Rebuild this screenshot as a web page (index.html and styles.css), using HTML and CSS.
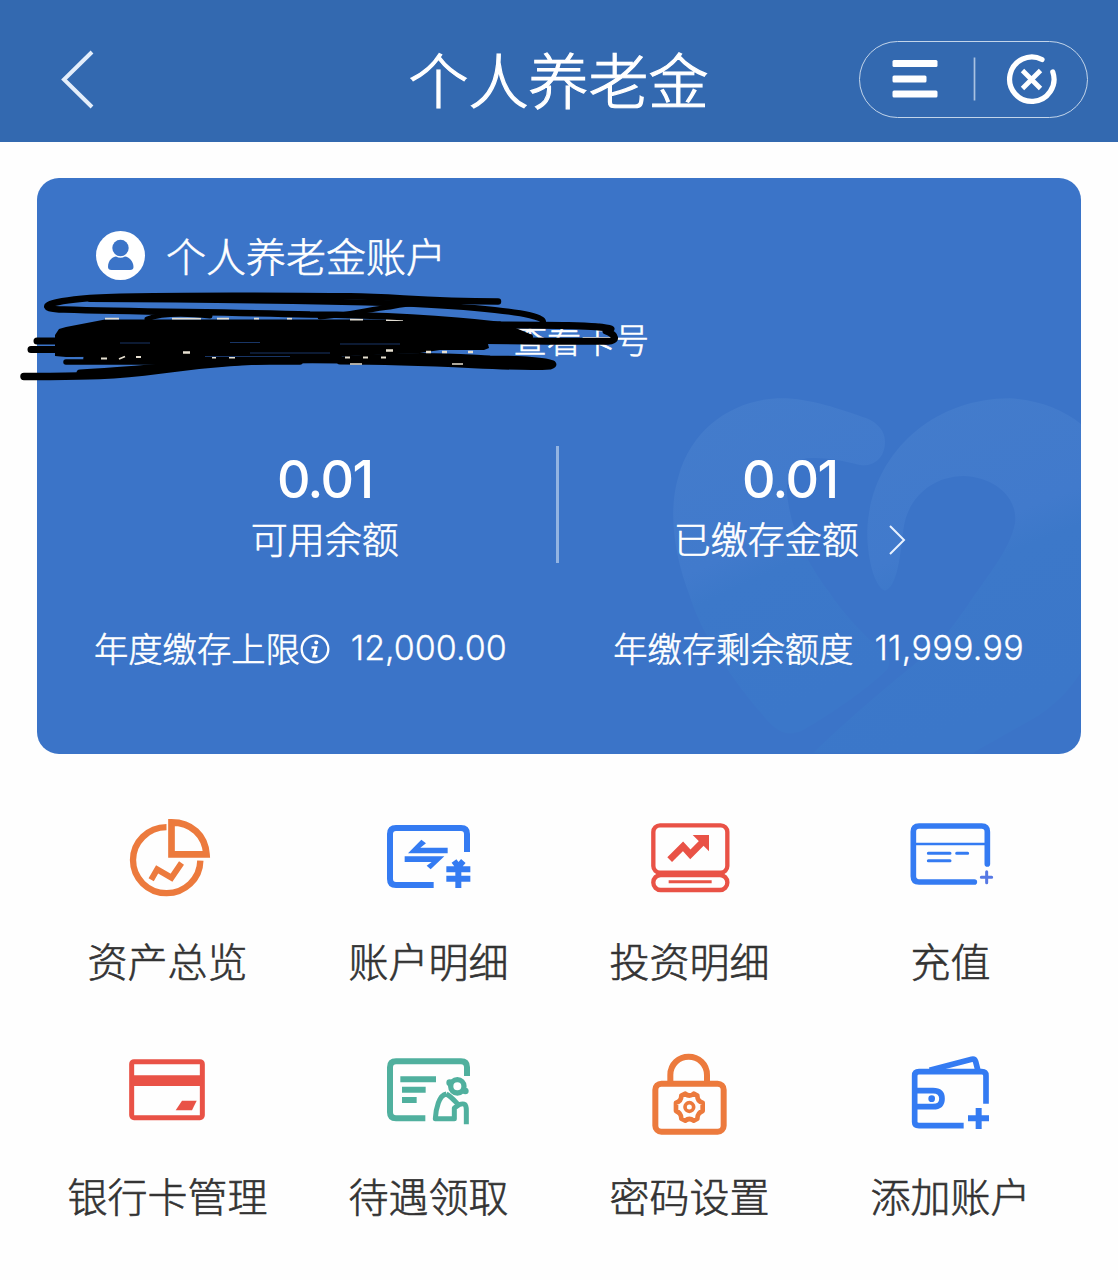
FILE: index.html
```html
<!DOCTYPE html>
<html lang="zh-CN">
<head>
    <meta charset="UTF-8">
    <meta name="viewport" content="width=device-width, initial-scale=1.0">
    <title>个人养老金</title>
    <link rel="stylesheet" href="styles.css">
</head>
<body>
    <header class="header">
        <svg class="back" width="40" height="64" viewBox="0 0 40 64">
            <path d="M35 4L7 31.500L35 59" fill="none" stroke="#e4eefb" stroke-width="4"/>
        </svg>
        <h1>个人养老金</h1>
        <div class="capsule">
            <svg width="228" height="76" viewBox="0 0 228 76">
                <g fill="#fff">
                    <rect x="33.500" y="19" width="45" height="7" rx="1.5"/>
                    <rect x="33.500" y="34.5" width="34" height="7" rx="1.5"/>
                    <rect x="33.500" y="49.500" width="45" height="7" rx="1.5"/>
                </g>
                <path d="M115.500 16.500V59.500" stroke="#a9c2e2" stroke-width="1.700"/>
                <g fill="none" stroke="#fff" stroke-linecap="round">
                    <path d="M183 18.500A22.200 22.200 0 1 0 193.800 31" stroke-width="5.200"/>
                    <path d="M163.500 29.500L181.500 47.500M181.500 29.500L163.500 47.500" stroke-width="4.800" stroke-linecap="butt"/>
                </g>
            </svg>
        </div>
    </header>

    <section class="card">
        <svg class="heart" width="442" height="373" viewBox="0 0 1326 1119">
            <defs>
                <linearGradient id="heartFill" x1="0" y1="0" x2="0.3" y2="1">
                    <stop offset="0" stop-color="#447ccb"/>
                    <stop offset="0.5" stop-color="#417acc"/>
                    <stop offset="0.6" stop-color="#3c78c9"/>
                    <stop offset="1" stop-color="#3b77c9"/>
                </linearGradient>
            </defs>
            <g fill="url(#heartFill)">
                <path d="M735 185C735 235 700 260 660 255C600 240 550 230 500 235C455 245 430 290 445 370C460 470 510 560 570 640C610 700 650 740 690 780C740 810 760 840 740 870C680 930 560 1010 490 1050C450 1070 420 1060 390 1030C300 930 190 780 150 650C100 520 85 390 115 290C160 130 300 50 440 55C530 60 620 95 680 115C715 130 735 155 735 185Z"/>
                <path d="M735 632C700 620 680 520 682 450C690 230 870 55 1110 55C1200 60 1270 90 1326 134V870C1290 930 1250 970 1190 1010C1120 1050 1050 1090 1000 1118H520C620 1020 740 920 850 830C900 790 930 750 980 680C1040 590 1110 510 1125 430C1135 350 1060 290 970 288C870 290 800 360 790 450C780 540 770 620 735 632Z"/>
            </g>
        </svg>

        <div class="account">
            <svg width="49" height="49" viewBox="0 0 49 49">
                <circle cx="24.500" cy="24.500" r="24.500" fill="#fff"/>
                <circle cx="24.500" cy="17" r="8.200" fill="#3b74c8"/>
                <path d="M12 36C12 29 17 25.500 20 25.500Q24.500 28 29 25.500C33 26 37.500 30 37.500 36Q37.500 39 34 39H15.500Q12 39 12 36Z" fill="#3b74c8"/>
            </svg>
            <span>个人养老金账户</span>
        </div>
        <div class="card-number">
            <a class="show-number">查看卡号</a>
        </div>

        <div class="balances">
            <div class="balance">
                <div class="amount">0.01</div>
                <div class="caption">可用余额</div>
            </div>
            <div class="divider"></div>
            <div class="balance">
                <div class="amount">0.01</div>
                <div class="caption">已缴存金额
                    <svg class="arrow" width="18" height="32" viewBox="0 0 18 32">
                        <path d="M2 2L16 16L2 30" fill="none" stroke="#e8f2ff" stroke-width="2"/>
                    </svg>
                </div>
            </div>
        </div>

        <div class="limits">
            <div class="limit">
                <span>年度缴存上限</span>
                <svg class="info" width="30" height="30" viewBox="0 0 30 30">
                    <circle cx="15" cy="15" r="13.300" fill="none" stroke="#fff" stroke-width="2.300"/>
                    <circle cx="16.300" cy="8.500" r="2" fill="#fff"/>
                    <path d="M11.500 13.500H16L13.700 22.300H17.500" fill="none" stroke="#fff" stroke-width="2.600"/>
                </svg>
                <span class="num">12,000.00</span>
            </div>
            <div class="limit">
                <span>年缴存剩余额度</span>
                <span class="num num-left">11,999.99</span>
            </div>
        </div>

        <!-- pen strokes over the card number -->
        <svg class="scribble" width="640" height="104" viewBox="0 284 640 104">
            <path d="M55 335L59 329L66 327L105 319.500H430L500 321.500L530 334V344L488 344L489 348L484 350H440L420 353L350 356L66 357L55 356Z"/>
            <path d="M105 318.700H119M172 318.700H201M217 318.700H229M254 318.700H259M287 318.700H292M350 319.500H363M386 320H403" stroke="#e2ddd3" stroke-width="1.800"/>
            <g fill="none" stroke="#000" stroke-linecap="round" stroke-linejoin="round">
                <path d="M498 301.500C420 301 400 297 350 296.200C270 296 150 294.500 90 298C42 302 36 309 64 309.500C140 312 230 312 310 314.500C390 315 450 319 500 325" stroke-width="6.500"/>
                <path d="M90 299C190 299.500 290 300.500 400 303.500C460 306 545 312 543 322" stroke-width="6"/>
                <path d="M147 319C160 314 180 313 210 316M320 317C350 315 370 309 390 307C405 304 415 303 430 302" stroke-width="5"/>
                <path d="M37 341H90M31 349.500H110" stroke-width="7"/>
                <path d="M500 325C545 325 600 325 611 329M606 331C617 335 617 341 608 341.300C560 341.500 510 341 460 340" stroke-width="7"/>
                <path d="M500 337H530" stroke-width="6"/>
                <path d="M66 362H300M86 358.500H340" stroke-width="5.500"/>
                <path d="M24 376.500C70 376 100 378 160 370C210 363 250 361 300 359" stroke-width="7.500"/>
                <path d="M80 373C170 368 230 358 340 360C420 354 450 357 490 359C535 359 562 363 550 366C510 369 450 361 340 361" stroke-width="7"/>
            </g>
            <path d="M101 358.500H107M119 359L125 356.500M136 357H141M212 357.500H216M229 357.500H235M345 357.500H350M363 357.500H368M381 357.500H386" stroke="#e6dfd0" stroke-width="1.800"/>
            <path d="M350 364H362M452 364H463" stroke="#e6dfd0" stroke-width="1.500"/>
            <path d="M183 352.500H190M386 350.500H393M426 352H431M442 352H447M468 352H473" stroke="#e6dfd0" stroke-width="2.500"/>
            <path d="M120 343H150M230 342.500H260M340 344H400M250 353H330M205 356.500H290" stroke="#183566" stroke-width="1"/>
        </svg>
    </section>

    <nav class="menu">
        <a class="item">
            <svg width="120" height="110" viewBox="-7.500 15 360 330" fill="none" stroke="#ec7a3d" stroke-width="19">
                <path d="M168 81.500A101 99 0 1 0 269.500 182"/>
                <path d="M183 67V163H288C284 106 243 67 183 67Z" stroke-width="20"/>
                <path d="M122 239L140 208L183 233L213 189" stroke-width="18"/>
            </svg>
            <span>资产总览</span>
        </a>
        <a class="item">
            <svg width="120" height="110" viewBox="-3 15 360 330" fill="none" stroke="#347bf2" stroke-width="18">
                <path d="M191 255H78Q60 255 60 237V102Q60 84 78 84H273Q291 84 291 102V156"/>
                <path d="M114 160L154 119L168 130L151 143H233V160ZM223 169L182 208L170 197L185 186H104V169Z" fill="#347bf2" stroke="none"/>
                <path d="M252 183L265 200L280 183M229 208H301M229 236H301M265 200V264" stroke-width="18"/>
            </svg>
            <span>账户明细</span>
        </a>
        <a class="item">
            <svg width="120" height="110" viewBox="0 15 360 330" fill="none" stroke="#e95246" stroke-width="13">
                <rect x="70" y="76" width="222" height="142" rx="20"/>
                <rect x="70" y="225" width="222" height="45" rx="22"/>
                <path d="M85 221H277" stroke-width="15"/>
                <path d="M116 245H245" stroke-width="9"/>
                <path d="M119 179L159 139L181 163L222 122" stroke-width="20"/>
                <path d="M188 105H237V154Z" fill="#e95246" stroke="none"/>
            </svg>
            <span>投资明细</span>
        </a>
        <a class="item">
            <svg width="120" height="110" viewBox="783 15 360 330" fill="none" stroke="#347bf2" stroke-width="17" stroke-linecap="round">
                <path d="M1033 246H867Q850 246 850 229V95Q850 78 867 78H1055Q1072 78 1072 95V192"/>
                <path d="M855 132H1070" stroke-width="8"/>
                <path d="M895 160H960M980 160H1013M895 182H960" stroke-width="9"/>
                <path d="M1054 232H1085M1070 215V248" stroke="#5678e4" stroke-width="9"/>
            </svg>
            <span>充值</span>
        </a>
        <a class="item">
            <svg width="120" height="110" viewBox="-6 0 360 330" fill="none" stroke="#e95246" stroke-width="15">
                <rect x="65" y="65" width="212" height="168" rx="7"/>
                <path d="M65 122H277" stroke-width="32"/>
                <path d="M216 182H260L246 211H197Z" fill="#e95246" stroke="none"/>
            </svg>
            <span>银行卡管理</span>
        </a>
        <a class="item">
            <svg width="120" height="110" viewBox="777 0 360 330" fill="none" stroke="#50b09e" stroke-width="18">
                <path d="M946 235H858Q840 235 840 217V82Q840 64 858 64H1053Q1071 64 1071 82V108"/>
                <path d="M871 118H978M876 149H947M876 180H920"/>
                <circle cx="1042" cy="139" r="20" stroke-width="16"/>
                <circle cx="1019" cy="128" r="10" fill="#50b09e" stroke="none"/>
                <circle cx="1066" cy="153" r="10" fill="#50b09e" stroke="none"/>
                <path d="M1009 162C987 165 978 206 976 236H1033V204L1047 194C1064 188 1069 193 1069 211V253M1009 162C1025 171 1035 184 1048 197" stroke-width="15" stroke-linejoin="round"/>
            </svg>
            <span>待遇领取</span>
        </a>
        <a class="item">
            <svg width="120" height="110" viewBox="0 0 360 330" fill="none" stroke="#ec7a3d" stroke-width="18">
                <rect x="76" y="131" width="205" height="144" rx="18"/>
                <path d="M121 130V105C121 72 147 50 176 50S231 72 231 105V130"/>
                <path d="M166 161Q178 172 191 161L202 167Q202 184 218 188V213Q202 219 202 236L191 242Q178 232 166 242L154 236Q154 219 138 213V188Q154 184 154 167Z" stroke-width="14" stroke-linejoin="round"/>
                <circle cx="178" cy="201" r="13" stroke-width="11"/>
            </svg>
            <span>密码设置</span>
        </a>
        <a class="item">
            <svg width="120" height="110" viewBox="783 0 360 330" fill="none" stroke="#347bf2" stroke-width="17">
                <path d="M1001 257H867Q854 257 854 246V107Q854 95 867 95H1055Q1068 95 1068 107V191"/>
                <path d="M899 91L1025 58Q1034 56 1037 65L1044 92" stroke-width="17"/>
                <path d="M860 152H909Q936 152 936 176T909 200H860"/>
                <circle cx="905" cy="176" r="10" fill="#347bf2" stroke="none"/>
                <path d="M1014 235H1077M1046 204V267" stroke-width="18"/>
            </svg>
            <span>添加账户</span>
        </a>
    </nav>
</body>
</html>
```
FILE: styles.css
```css
* {
    box-sizing: border-box;
}
body {
    margin: 0;
    min-height: 1280px;
    background-color: #fefefe;
    color: #333;
    font-family: "Noto Sans CJK SC", sans-serif;
    font-weight: 300;
    -webkit-text-stroke: 0.600px;
}
svg {
    display: block;
    flex-shrink: 0;
}
.header {
    display: grid;
    grid-template-columns: 1fr auto 1fr;
    align-items: center;
    height: 142px;
    padding: 17px 30px 0 57px;
    background-color: #3369b0;
    color: #fff;
}
.header h1 {
    margin: 0 28px 4px 0;
    font-size: 60px;
    font-weight: 300;
    line-height: 80px;
    -webkit-text-stroke: 1.200px;
}
.capsule {
    justify-self: end;
    width: 229px;
    height: 77px;
    border: 1.500px solid #c3d5ea;
    border-radius: 39px;
}
.capsule svg {
    margin: -1px;
}
.card {
    position: relative;
    height: 576px;
    margin: 36px 37px 0;
    padding-top: 47px;
    border-radius: 22px;
    background-color: #3b74c8;
    color: #fff;
}
.heart {
    position: absolute;
    right: -1px;
    bottom: 1px;
    clip-path: inset(0 1px 0 0);
}
.account {
    display: flex;
    align-items: center;
    gap: 21px;
    height: 60px;
    padding-left: 59px;
    font-size: 40px;
}
.card-number {
    height: 50px;
    margin-top: 29px;
    padding-left: 476px;
    font-size: 34px;
    line-height: 50px;
}
.balances {
    position: relative;
    display: grid;
    grid-template-columns: 1fr 3px 1fr;
    height: 117px;
    margin-top: 82px;
    padding-right: 4px;
}
.balance {
    text-align: center;
}
.balance:first-child {
    padding-left: 57px;
}
.balance:last-child {
    padding-right: 56px;
}
.divider {
    height: 117px;
    background-color: #93b4e2;
}
.amount {
    height: 66px;
    font-family: Inter, sans-serif;
    font-size: 52px;
    font-weight: 500;
    line-height: 68px;
    letter-spacing: -1.500px;
    -webkit-text-stroke: 0;
}
.caption {
    display: flex;
    align-items: center;
    justify-content: center;
    height: 52px;
    font-size: 37px;
    line-height: 52px;
}
.arrow {
    margin: 4px 0 0 29px;
}
.limits {
    position: relative;
    display: flex;
    justify-content: space-between;
    margin-top: 57px;
    padding: 0 57px;
    font-size: 34.300px;
    line-height: 50px;
}
.limit {
    display: flex;
    align-items: center;
}
.info {
    margin-top: 4px;
}
.num {
    margin: 3px 0 0 21px;
    font-family: Inter, sans-serif;
    font-size: 34px;
    -webkit-text-stroke: 0.300px;
}
.num-left {
    letter-spacing: 0.300px;
}
.scribble {
    position: absolute;
    left: -37px;
    top: 106px;
}
.menu {
    display: grid;
    grid-template-columns: repeat(4, 1fr);
    row-gap: 50px;
    margin: 51px 37px 0;
}
.item {
    display: flex;
    flex-direction: column;
    align-items: center;
    gap: 17px;
    padding-bottom: 2px;
    font-size: 40px;
    line-height: 56px;
}
```
